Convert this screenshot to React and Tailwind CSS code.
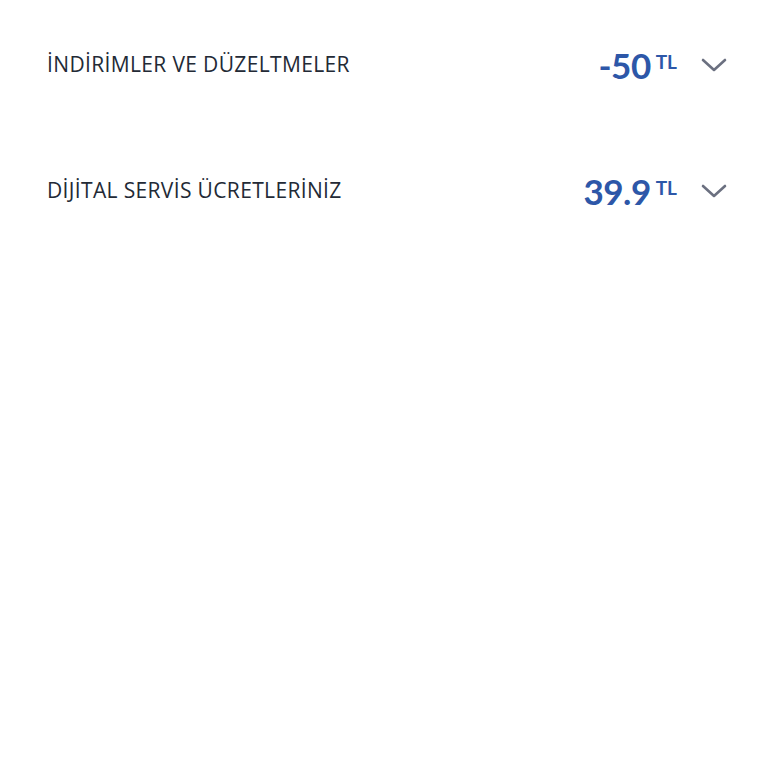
import React from 'react';

const rows = [
  { label: 'İNDİRİMLER VE DÜZELTMELER', amount: '-50' },
  { label: 'DİJİTAL SERVİS ÜCRETLERİNİZ', amount: '39.9' },
];

const Chevron = () => (
  <svg width="26" height="16" viewBox="0 0 26 16" fill="none" className="text-[#6b7080]">
    <path d="M2 3l11 10L24 3" stroke="currentColor" strokeWidth="2.6" strokeLinecap="round" strokeLinejoin="round" />
  </svg>
);

export default function App() {
  return (
    <div className="min-h-[768px] bg-white pt-[39px] pl-[47px] pr-[41px]">
      {rows.map((row) => (
        <div key={row.label} className="flex items-center justify-between h-[52px] mb-[74px]">
          <span className="text-[21px] font-medium text-[#232a36] tracking-[0.35px]" style={{ fontFamily: '"Open Sans", "Noto Sans", sans-serif' }}>
            {row.label}
          </span>
          <div className="flex items-center" style={{ fontFamily: 'Lato, "Noto Sans", sans-serif' }}>
            <span className="text-[35px] font-bold text-[#2d57a8] tracking-[-0.5px] leading-none">{row.amount}</span>
            <span className="text-[19px] font-bold text-[#2d57a8] self-start mt-[4px] ml-[5px] leading-none">TL</span>
            <span className="ml-[24px]"><Chevron /></span>
          </div>
        </div>
      ))}
    </div>
  );
}
